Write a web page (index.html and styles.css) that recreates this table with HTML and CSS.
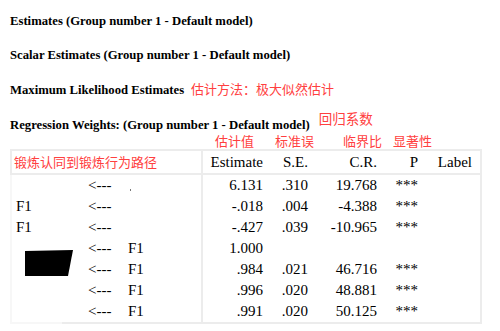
FILE: index.html
```html
<!DOCTYPE html>
<html>
<head>
<meta charset="utf-8">
<link rel="stylesheet" href="styles.css">
</head>
<body>
<div class="page">
  <div class="title">Estimates (Group number 1 - Default model)</div>
  <div class="title">Scalar Estimates (Group number 1 - Default model)</div>
  <div class="title">Maximum Likelihood Estimates<span class="note note-inline">估计方法：极大似然估计</span></div>
  <div class="title last">Regression Weights: (Group number 1 - Default model)<span class="note note-raised">回归系数</span></div>
  <div class="notes-row">
    <span class="note n1">估计值</span>
    <span class="note n2">标准误</span>
    <span class="note n3">临界比</span>
    <span class="note n4">显著性</span>
  </div>
  <div class="table-wrap">
    <table class="grid">
      <colgroup>
        <col class="c-left"><col class="c-arrow"><col class="c-right">
        <col class="c-est"><col class="c-se"><col class="c-cr"><col class="c-p"><col class="c-label">
      </colgroup>
      <thead>
        <tr>
          <th colspan="3" class="path"><span class="note">锻炼认同到锻炼行为路径</span></th>
          <th class="num">Estimate</th>
          <th class="num">S.E.</th>
          <th class="num">C.R.</th>
          <th class="num">P</th>
          <th class="num lab">Label</th>
        </tr>
      </thead>
      <tbody>
        <tr><td class="lv"></td><td class="ar">&lt;---</td><td class="rv"><span class="speck"></span></td><td class="num">6.131</td><td class="num">.310</td><td class="num">19.768</td><td class="num">***</td><td class="num lab"></td></tr>
        <tr><td class="lv">F1</td><td class="ar">&lt;---</td><td class="rv"></td><td class="num">-.018</td><td class="num">.004</td><td class="num">-4.388</td><td class="num">***</td><td class="num lab"></td></tr>
        <tr><td class="lv">F1</td><td class="ar">&lt;---</td><td class="rv"></td><td class="num">-.427</td><td class="num">.039</td><td class="num">-10.965</td><td class="num">***</td><td class="num lab"></td></tr>
        <tr><td class="lv"></td><td class="ar">&lt;---</td><td class="rv">F1</td><td class="num">1.000</td><td class="num"></td><td class="num"></td><td class="num"></td><td class="num lab"></td></tr>
        <tr><td class="lv"></td><td class="ar">&lt;---</td><td class="rv">F1</td><td class="num">.984</td><td class="num">.021</td><td class="num">46.716</td><td class="num">***</td><td class="num lab"></td></tr>
        <tr><td class="lv"></td><td class="ar">&lt;---</td><td class="rv">F1</td><td class="num">.996</td><td class="num">.020</td><td class="num">48.881</td><td class="num">***</td><td class="num lab"></td></tr>
        <tr><td class="lv"></td><td class="ar">&lt;---</td><td class="rv">F1</td><td class="num">.991</td><td class="num">.020</td><td class="num">50.125</td><td class="num">***</td><td class="num lab"></td></tr>
      </tbody>
    </table>
    <div class="mask mask-left"></div>
    <div class="mask mask-bottom"></div>
    <svg class="redact" width="49" height="27" viewBox="0 0 49 27"><polygon points="0,1 48,0 43,26 0,26" fill="#000"/></svg>
  </div>
</div>
</body>
</html>
```

FILE: styles.css
```css
html, body {
  margin: 0;
  padding: 0;
  background: #fff;
}
.page {
  padding: 13px 0 0 10px;
  font-family: "Liberation Serif", "Times New Roman", serif;
  color: #000;
}
.title {
  font-weight: bold;
  font-size: 12.7px;
  line-height: 16px;
  height: 16px;
  margin-bottom: 18px;
  white-space: nowrap;
}
.title.last {
  margin-bottom: 0;
}
.note {
  font-family: "Noto Sans CJK SC", sans-serif;
  font-weight: normal;
  font-size: 13px;
  line-height: 16px;
  color: #ff4040;
}
.note-inline {
  margin-left: 7px;
}
.note-raised {
  position: relative;
  top: -5px;
  margin-left: 9px;
  font-size: 13.5px;
}
.notes-row {
  display: flex;
  height: 17px;
  line-height: 17px;
  margin-top: 1px;
}
.notes-row .note {
  line-height: 17px;
}
.n1 { margin-left: 205px; }
.n2 { margin-left: 21px; }
.n3 { margin-left: 29px; }
.n4 { margin-left: 11px; }

.table-wrap {
  position: relative;
  width: 472px;
}
.grid {
  border-collapse: separate;
  border-spacing: 0;
  table-layout: fixed;
  width: 472px;
  border: 2px solid #ececec;
  font-size: 15px;
}
.c-left { width: 68px; }
.c-arrow { width: 40px; }
.c-right { width: 83px; }
.c-est { width: 65px; }
.c-se { width: 45px; }
.c-cr { width: 69px; }
.c-p { width: 41px; }
.c-label { width: 57px; }

.grid th {
  font-weight: normal;
  height: 22px;
  line-height: 22px;
  padding: 0;
  border-bottom: 2px solid #ececec;
  white-space: nowrap;
}
.grid td {
  height: 21px;
  line-height: 21px;
  padding: 0;
  white-space: nowrap;
}
.grid .path {
  text-align: left;
  padding-left: 2px;
  border-right: 2px solid #ececec;
}
.grid .path .note {
  line-height: 22px;
}
.grid .num {
  text-align: right;
  padding-right: 5px;
}
.grid .lab {
  padding-right: 8px;
}
.grid .lv {
  padding-left: 4px;
}
.grid .ar {
  padding-left: 8px;
}
.grid .rv {
  padding-left: 8px;
  border-right: 2px solid #ececec;
}
.speck {
  display: inline-block;
  width: 1px;
  height: 2px;
  background: #777;
  vertical-align: -1px;
  margin-left: 2px;
}
.mask {
  position: absolute;
  background: rgba(255, 255, 255, 0.6);
}
.mask-left {
  left: 0;
  top: 26px;
  width: 2px;
  height: 149px;
}
.mask-bottom {
  left: 2px;
  top: 173px;
  width: 50px;
  height: 2px;
}
.redact {
  position: absolute;
  left: 15px;
  top: 101px;
}
```
